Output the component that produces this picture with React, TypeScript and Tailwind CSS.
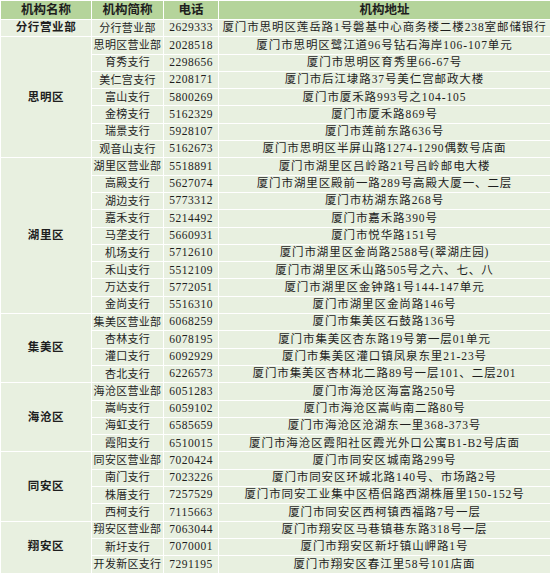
const groups: { name: string; rows: [string, string, string][] }[] = [
  { name: '分行营业部', rows: [['分行营业部', '2629333', '厦门市思明区莲岳路1号磐基中心商务楼二楼238室邮储银行']] },
  {
    name: '思明区',
    rows: [
      ['思明区营业部', '2028518', '厦门市思明区鹭江道96号钻石海岸106-107单元'],
      ['育秀支行', '2298656', '厦门市思明区育秀里66-67号'],
      ['美仁宫支行', '2208171', '厦门市后江埭路37号美仁宫邮政大楼'],
      ['富山支行', '5800269', '厦门市厦禾路993号之104-105'],
      ['金榜支行', '5162329', '厦门市厦禾路869号'],
      ['瑞景支行', '5928107', '厦门市莲前东路636号'],
      ['观音山支行', '5162673', '厦门市思明区半屏山路1274-1290偶数号店面'],
    ],
  },
  {
    name: '湖里区',
    rows: [
      ['湖里区营业部', '5518891', '厦门市湖里区吕岭路21号吕岭邮电大楼'],
      ['高殿支行', '5627074', '厦门市湖里区殿前一路289号高殿大厦一、二层'],
      ['湖边支行', '5773312', '厦门市枋湖东路268号'],
      ['嘉禾支行', '5214492', '厦门市嘉禾路390号'],
      ['马垄支行', '5660931', '厦门市悦华路151号'],
      ['机场支行', '5712610', '厦门市湖里区金尚路2588号(翠湖庄园)'],
      ['禾山支行', '5512109', '厦门市湖里区禾山路505号之六、七、八'],
      ['万达支行', '5772051', '厦门市湖里区金钟路1号144-147单元'],
      ['金尚支行', '5516310', '厦门市湖里区金尚路146号'],
    ],
  },
  {
    name: '集美区',
    rows: [
      ['集美区营业部', '6068259', '厦门市集美区石鼓路136号'],
      ['杏林支行', '6078195', '厦门市集美区杏东路19号第一层01单元'],
      ['灌口支行', '6092929', '厦门市集美区灌口镇凤泉东里21-23号'],
      ['杏北支行', '6226573', '厦门市集美区杏林北二路89号一层101、二层201'],
    ],
  },
  {
    name: '海沧区',
    rows: [
      ['海沧区营业部', '6051283', '厦门市海沧区海富路250号'],
      ['嵩屿支行', '6059102', '厦门市海沧区嵩屿南二路80号'],
      ['海虹支行', '6585659', '厦门市海沧区沧湖东一里368-373号'],
      ['霞阳支行', '6510015', '厦门市海沧区霞阳社区霞光外口公寓B1-B2号店面'],
    ],
  },
  {
    name: '同安区',
    rows: [
      ['同安区营业部', '7020424', '厦门市同安区城南路299号'],
      ['南门支行', '7023226', '厦门市同安区环城北路140号、市场路2号'],
      ['株厝支行', '7257529', '厦门市同安工业集中区梧侣路西湖株厝里150-152号'],
      ['西柯支行', '7115663', '厦门市同安区西柯镇西福路7号一层'],
    ],
  },
  {
    name: '翔安区',
    rows: [
      ['翔安区营业部', '7063044', '厦门市翔安区马巷镇巷东路318号一层'],
      ['新圩支行', '7070001', '厦门市翔安区新圩镇山岬路1号'],
      ['开发新区支行', '7291195', '厦门市翔安区春江里58号101店面'],
    ],
  },
];

const cell = 'border border-white bg-[#e8f0e0] text-center whitespace-nowrap p-0 overflow-hidden';

export default function App() {
  return (
    <div
      className="w-[550px] h-[577px] bg-white overflow-hidden text-[#1e1e1e]"
      style={{ fontFamily: '"Liberation Serif", "Noto Sans CJK SC", serif' }}
    >
      <table className="w-[550px] table-fixed border-collapse text-[11.5px] leading-none">
        <colgroup>
          <col className="w-[91px]" />
          <col className="w-[72px]" />
          <col className="w-[55px]" />
          <col className="w-[332px]" />
        </colgroup>
        <thead>
          <tr className="h-[19px] bg-[#b5d49b] text-[12.5px] font-bold">
            <th className="border border-white">机构名称</th>
            <th className="border border-white">机构简称</th>
            <th className="border border-white">电话</th>
            <th className="border border-white">机构地址</th>
          </tr>
        </thead>
        <tbody>
          {groups.map((g) =>
            g.rows.map((r, i) => (
              <tr key={g.name + r[0]} className="h-[17.3px]">
                {i === 0 && (
                  <td rowSpan={g.rows.length} className={`${cell} font-bold text-[11.5px] tracking-[0.6px]`}>
                    {g.name}
                  </td>
                )}
                <td className={`${cell} text-[11px] tracking-[0.3px]`}>{r[0]}</td>
                <td className={`${cell} tracking-[0.5px]`}>{r[1]}</td>
                <td className={`${cell} tracking-[0.9px]`}>{r[2]}</td>
              </tr>
            ))
          )}
        </tbody>
      </table>
    </div>
  );
}
